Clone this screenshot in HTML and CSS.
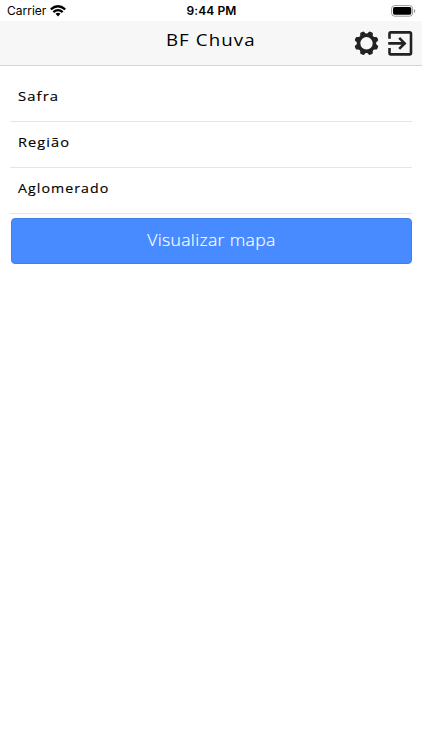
FILE: index.html
```html
<!DOCTYPE html>
<html lang="pt">
<head>
<meta charset="utf-8">
<title>BF Chuva</title>
<link rel="stylesheet" href="styles.css">
</head>
<body>
<div class="status">
  <div class="carrier"><span>Carrier</span>
    <svg width="16" height="12" viewBox="0 0 16 12" fill="none" stroke="#000" stroke-width="2.3"><path d="M.8 4.3Q8-1.8 15.2 4.3M3.3 7.1Q8 3.1 12.7 7.1"/><path d="M5.5 8.8Q8 6.8 10.5 8.8L8 11.4Z" fill="#000" stroke="none"/></svg>
  </div>
  <time>9:44 PM</time>
  <svg class="battery" width="25" height="12" viewBox="0 0 25 12"><rect x=".6" y=".6" width="21" height="10.6" rx="3" fill="#fff" stroke="#999"/><rect x="2" y="2" width="18.3" height="7.8" rx="1.7"/><path d="M23 4v4q1.3-.6 1.3-2T23 4" fill="#999"/></svg>
</div>
<header class="toolbar">
  <h1><span>BF Chuva</span></h1>
  <div class="actions">
    <svg width="26" height="26" viewBox="-13.5 -13.3 26 26">
      <circle r="7.9" fill="none" stroke="#222" stroke-width="3.4"/>
      <g fill="#222"><path id="tooth" d="M-4-8.4Q-2.4-9.5-2.2-11.2Q-2-12.1-1-12.1H1Q2-12.1 2.2-11.2Q2.4-9.5 4-8.4Z" transform="rotate(22.5)"/><use href="#tooth" transform="rotate(45)"/><use href="#tooth" transform="rotate(90)"/><use href="#tooth" transform="rotate(135)"/><use href="#tooth" transform="rotate(180)"/><use href="#tooth" transform="rotate(225)"/><use href="#tooth" transform="rotate(270)"/><use href="#tooth" transform="rotate(315)"/></g>
    </svg>
    <svg width="26" height="26" viewBox="-.4 -.4 26 26" fill="none" stroke="#222" stroke-width="2.6"><path d="M2.1 8.3V3.2Q2.1 2 3.3 2H22.2Q23.6 2 23.6 3.4V22.6Q23.6 24 22.2 24H3.3Q2.1 24 2.1 22.8V17.7M.8 13H16.5M11.8 7.5L17.3 13L11.8 18.5"/></svg>
  </div>
</header>
<main>
  <div class="item"><span>Safra</span></div>
  <div class="item"><span>Região</span></div>
  <div class="item"><span>Aglomerado</span></div>
  <button><span>Visualizar mapa</span></button>
</main>
</body>
</html>
```
FILE: styles.css
```css
* { box-sizing: border-box; }
body { margin: 0; height: 750px; background: #fff; color: #000; font-family: "Open Sans", sans-serif; }
svg { display: block; }
.status { height: 21px; padding: 0 6px 0 7px; display: grid; grid-template-columns: 1fr auto 1fr; align-items: center; font: 12px/21px Inter, sans-serif; }
.carrier { display: flex; align-items: center; gap: 4px; }
.status time { font-weight: 600; letter-spacing: .1px; }
.battery { justify-self: end; }
.toolbar { height: 45px; display: grid; grid-template-columns: 1fr auto 1fr; background: #f7f7f7; border-bottom: 1px solid #d5d5d5; }
.toolbar h1 { grid-column: 2; margin: 0; font-size: 17px; font-weight: 400; line-height: 38px; letter-spacing: 1px; }
h1 span, .item span, button span { display: inline-block; transform: scaleX(1.1); }
.actions { display: flex; justify-content: flex-end; gap: 8px; padding: 9px 9px 0 0; }
main { padding: 10px 10px 0; }
.item { height: 46px; padding-left: 8px; border-bottom: 1px solid #e5e5e5; font-size: 13.5px; line-height: 41px; letter-spacing: 1px; -webkit-text-stroke: .15px #000; }
.item span { transform-origin: left; }
.item:nth-child(2) span { transform: scaleX(1.08); }
.item:nth-child(3) span { transform: scaleX(1.05); }
button { display: block; width: 401px; height: 46px; margin: 4px 0 0 .5px; padding: 0 0 2px; border: 1px solid #427fe8; border-radius: 4px; background: #488aff; color: #fff; font: 300 16px/42px "Open Sans", sans-serif; letter-spacing: .3px; -webkit-text-stroke: .15px #fff; }
```
